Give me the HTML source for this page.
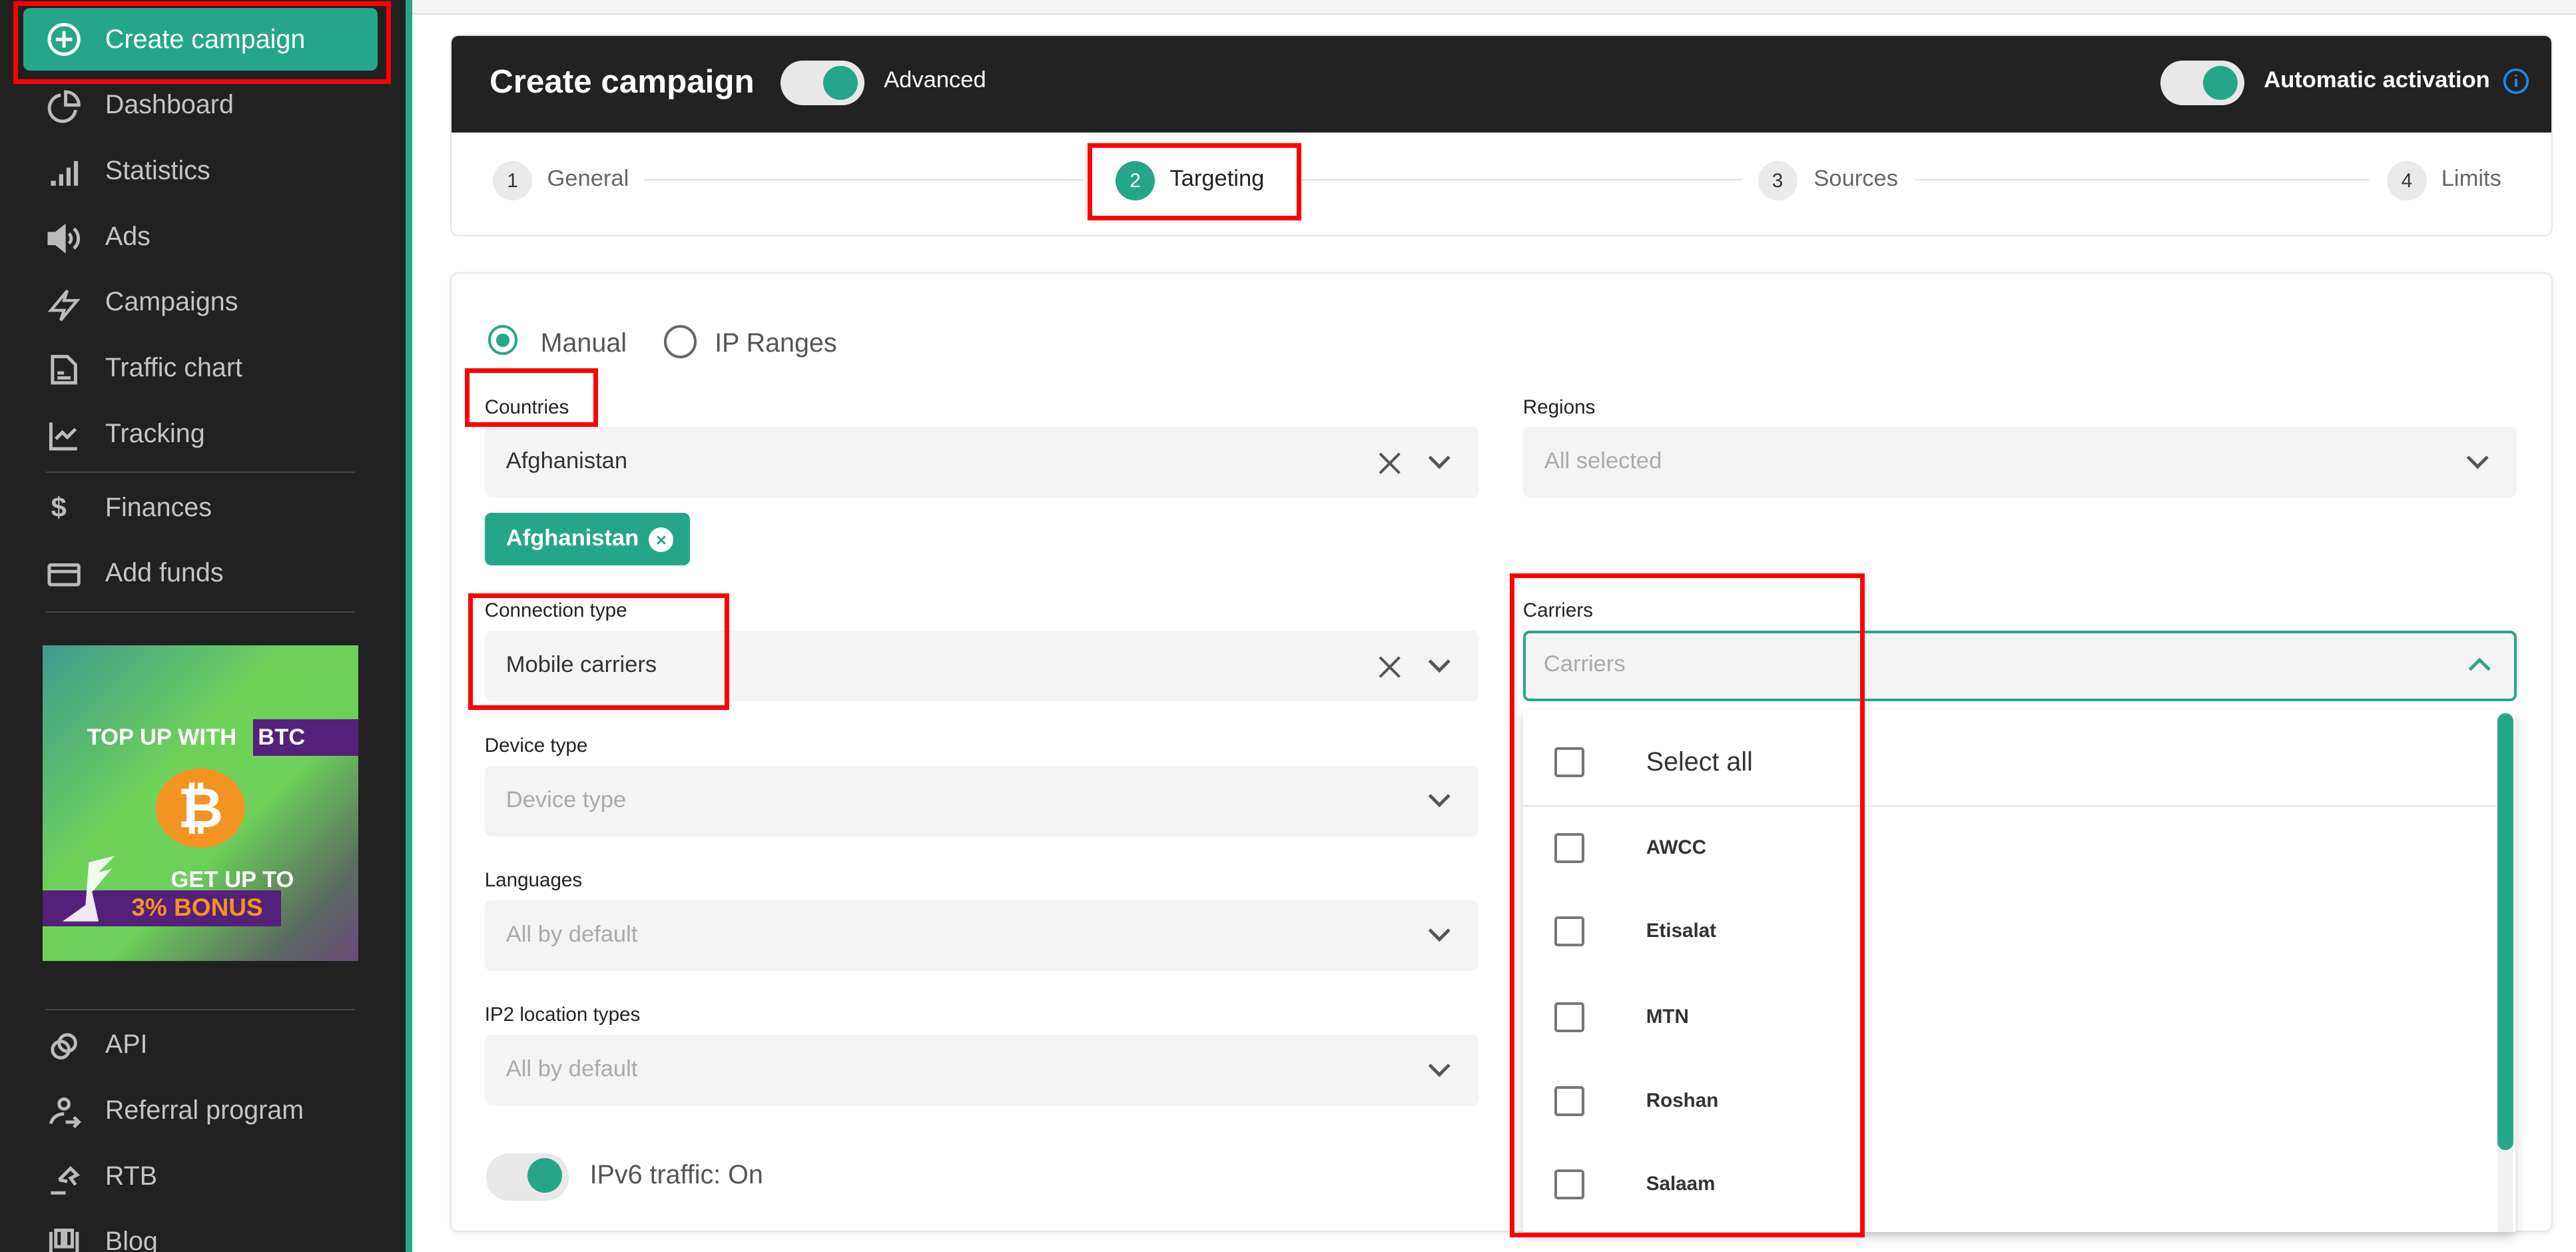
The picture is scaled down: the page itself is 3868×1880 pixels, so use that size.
<!DOCTYPE html>
<html><head><meta charset="utf-8"><style>
html,body{margin:0;padding:0;}
html{width:3868px;height:1880px;overflow:hidden;background:#fff;}
#r{position:relative;width:1568px;height:762px;zoom:2.46684;font-family:"Liberation Sans",sans-serif;overflow:hidden;background:#fff;}
.a{position:absolute;}
.sb{left:0;top:0;width:247px;height:762px;background:#212121;}
.stripe{left:247px;top:0;width:4px;height:762px;background:#26a587;}
.mi{left:64px;color:#c4c4c4;font-size:16px;line-height:20px;}
.ic{left:28px;width:22px;height:22px;}
.sep{left:28px;width:188px;height:1px;background:#444;}
.red{border:3px solid #f00;box-sizing:border-box;}
.lbl{font-size:12px;color:#222;}
.inp{background:#f4f4f4;border-radius:4px;height:43px;}
.inp span{position:absolute;left:13px;top:13px;font-size:14px;color:#333;}
.ph span{color:#aaa!important;}
.chev{position:absolute;right:17px;top:16px;}
.cb{left:946px;width:15px;height:15px;border:2px solid #777;border-radius:2px;}
.it{left:1002px;font-size:12px;font-weight:bold;color:#333;}
.circ{width:24px;height:24px;border-radius:50%;background:#eaeaea;color:#333;font-size:12px;text-align:center;line-height:24px;}
.st{font-size:14px;color:#666;}
.tgl{width:51px;height:27px;border-radius:14px;background:#e8e8e8;}
.tgl::after{content:"";position:absolute;right:4px;top:3px;width:21px;height:21px;border-radius:50%;background:#26a688;}
</style></head><body><div id="r">
<div class="a" style="left:251px;top:0;width:1317px;height:8px;background:#f3f3f3;border-bottom:1px solid #ddd"></div>
<div class="a sb"></div><div class="a stripe"></div>
<div class="a" style="left:14px;top:5px;width:216px;height:38px;background:#26a688;border-radius:4px"></div>
<div class="a red" style="left:8px;top:1px;width:230px;height:50px"></div>
<svg class="a" style="left:28px;top:13px" width="22" height="22" viewBox="0 0 22 22" fill="none" stroke="#fff" stroke-width="2"><circle cx="11" cy="11" r="9"/><path d="M11 6v10M6 11h10"/></svg>
<div class="a mi" style="top:14px;color:#fff">Create campaign</div>
<svg class="a" style="left:28px;top:54px" width="22" height="22" viewBox="0 0 22 22" fill="none" stroke="#bbb" stroke-width="2"><path d="M9 4a8 8 0 1 0 9 9"/><path d="M12 2v8h8a8 8 0 0 0-8-8z"/></svg>
<div class="a mi" style="top:54px">Dashboard</div>
<svg class="a" style="left:28px;top:94px" width="22" height="22" fill="#bbb"><rect x="3" y="16" width="3" height="3"/><rect x="8" y="12" width="2.5" height="7"/><rect x="12.5" y="8" width="2.5" height="11"/><rect x="17" y="4" width="2.5" height="15"/></svg>
<div class="a mi" style="top:94px">Statistics</div>
<svg class="a" style="left:28px;top:134px" width="22" height="22" fill="none" stroke="#bbb" stroke-width="2"><path d="M2 8h4l5-4v14l-5-4H2z" fill="#bbb"/><path d="M14 8a4 4 0 0 1 0 6M17 5a8 8 0 0 1 0 12"/></svg>
<div class="a mi" style="top:134px">Ads</div>
<svg class="a" style="left:28px;top:174px" width="22" height="22" fill="none" stroke="#bbb" stroke-width="1.8"><path d="M13 3L3 15h8l-2 6 10-12h-8z"/></svg>
<div class="a mi" style="top:174px">Campaigns</div>
<svg class="a" style="left:28px;top:214px" width="22" height="22" fill="none" stroke="#bbb" stroke-width="2"><path d="M4 3h9l5 5v11H4z"/><path d="M7 13h4M7 16h8"/></svg>
<div class="a mi" style="top:214px">Traffic chart</div>
<svg class="a" style="left:28px;top:254px" width="22" height="22" fill="none" stroke="#bbb" stroke-width="2"><path d="M3 3v16h16M6 13l4-4 3 3 5-5"/></svg>
<div class="a mi" style="top:254px">Tracking</div>
<div class="a sep" style="top:287px"></div>
<div class="a" style="left:31px;top:299px;color:#bbb;font-size:17px;font-weight:bold">$</div>
<div class="a mi" style="top:299px">Finances</div>
<svg class="a" style="left:28px;top:339px" width="22" height="22" fill="none" stroke="#bbb" stroke-width="2"><rect x="2" y="5" width="18" height="12" rx="1"/><path d="M2 9h18"/></svg>
<div class="a mi" style="top:339px">Add funds</div>
<div class="a sep" style="top:372px"></div>
<div class="a" style="left:26px;top:393px;width:192px;height:192px;background:linear-gradient(135deg,#3f9a8f 0%,#6fd25a 40%,#6bd05a 60%,#5b6a60 85%,#6a4a7a 100%);overflow:hidden">
<div class="a" style="left:27px;top:48px;color:#fff;font-weight:bold;font-size:14px;white-space:nowrap">TOP UP WITH</div>
<div class="a" style="left:128px;top:45px;width:64px;height:22px;background:#55207a"></div>
<div class="a" style="left:131px;top:48px;color:#fff;font-weight:bold;font-size:14px">BTC</div>
<div class="a" style="left:69px;top:75px;width:54px;height:48px;border-radius:50%;background:#f39322;color:#fff;font-weight:bold;font-size:34px;text-align:center;line-height:48px">₿</div>
<div class="a" style="left:78px;top:135px;color:#fff;font-weight:bold;font-size:14px;white-space:nowrap">GET UP TO</div>
<div class="a" style="left:0;top:149px;width:145px;height:22px;background:#55207a"></div>
<div class="a" style="left:54px;top:151px;color:#f39322;font-weight:bold;font-size:15px;white-space:nowrap">3% BONUS</div>
<svg class="a" style="left:8px;top:128px" width="45" height="50"><path d="M20 4L36 0 26 10 34 8 22 22 26 40 4 40 18 30z" fill="#fff" opacity=".9"/></svg>
</div>
<div class="a sep" style="top:614px"></div>
<svg class="a" style="left:28px;top:626px" width="22" height="22" fill="none" stroke="#bbb" stroke-width="2"><circle cx="13" cy="9" r="5"/><circle cx="9" cy="13" r="5"/></svg>
<div class="a mi" style="top:626px">API</div>
<svg class="a" style="left:28px;top:666px" width="22" height="22" fill="none" stroke="#bbb" stroke-width="2"><circle cx="11" cy="6" r="3"/><path d="M3 18a8 7 0 0 1 8-6M12 17h8M17 14l3 3-3 3"/></svg>
<div class="a mi" style="top:666px">Referral program</div>
<svg class="a" style="left:28px;top:706px" width="22" height="22" fill="none" stroke="#bbb" stroke-width="2"><path d="M3 20h9M8 12l7-7 4 4-4 2 3 4M8 12l5 1"/></svg>
<div class="a mi" style="top:706px">RTB</div>
<svg class="a" style="left:28px;top:746px" width="22" height="22" fill="none" stroke="#bbb" stroke-width="2"><path d="M3 4v14h16V4M6 3h4v10H6zM12 3h4v10h-4z"/></svg>
<div class="a mi" style="top:746px">Blog</div>

<!-- header card -->
<div class="a" style="left:274px;top:21px;width:1280px;height:123px;border:1px solid #e4e4e4;border-radius:5px;box-sizing:border-box;overflow:hidden">
<div class="a" style="left:0;top:0;width:1280px;height:59px;background:#222"></div>
</div>
<div class="a" style="left:298px;top:38px;color:#fff;font-size:20px;font-weight:bold">Create campaign</div>
<div class="a tgl" style="left:475px;top:37px"></div>
<div class="a" style="left:538px;top:41px;color:#fff;font-size:14px">Advanced</div>
<div class="a tgl" style="left:1315px;top:37px"></div>
<div class="a" style="left:1378px;top:41px;color:#fff;font-size:14px;font-weight:bold">Automatic activation</div>
<svg class="a" style="left:1523px;top:41px" width="17" height="17" fill="none" stroke="#1e88e5" stroke-width="1.5"><circle cx="8.5" cy="8.5" r="7"/><path d="M8.5 7v5M8.5 4.5v1"/></svg>
<div class="a" style="left:392px;top:109px;width:268px;height:1px;background:#ddd"></div>
<div class="a" style="left:792px;top:109px;width:268px;height:1px;background:#ddd"></div>
<div class="a" style="left:1166px;top:109px;width:276px;height:1px;background:#ddd"></div>
<div class="a circ" style="left:300px;top:98px">1</div><div class="a st" style="left:333px;top:101px">General</div>
<div class="a circ" style="left:679px;top:98px;background:#26a688;color:#fff">2</div><div class="a st" style="left:712px;top:101px;color:#222">Targeting</div>
<div class="a red" style="left:662px;top:87px;width:130px;height:47px"></div>
<div class="a circ" style="left:1070px;top:98px">3</div><div class="a st" style="left:1104px;top:101px">Sources</div>
<div class="a circ" style="left:1453px;top:98px">4</div><div class="a st" style="left:1486px;top:101px">Limits</div>

<!-- form card -->
<div class="a" style="left:274px;top:166px;width:1280px;height:584px;border:1px solid #e6e6e6;border-radius:5px;box-sizing:border-box;box-shadow:0 1px 3px rgba(0,0,0,.08)"></div>
<div class="a" style="left:297px;top:198px;width:18px;height:18px;border:2px solid #26a688;border-radius:50%;box-sizing:border-box"></div>
<div class="a" style="left:302px;top:203px;width:8px;height:8px;background:#26a688;border-radius:50%"></div>
<div class="a" style="left:329px;top:200px;font-size:16px;color:#555">Manual</div>
<div class="a" style="left:404px;top:198px;width:20px;height:20px;border:2px solid #666;border-radius:50%;box-sizing:border-box"></div>
<div class="a" style="left:435px;top:200px;font-size:16px;color:#555">IP Ranges</div>

<div class="a lbl" style="left:295px;top:241px">Countries</div>
<div class="a red" style="left:283px;top:224px;width:81px;height:36px"></div>
<div class="a inp" style="left:295px;top:260px;width:605px"><span>Afghanistan</span>
<svg class="chev" style="right:46px;top:14px" width="16" height="16" fill="none" stroke="#555" stroke-width="1.6"><path d="M2 2l12 12M14 2L2 14"/></svg>
<svg class="chev" width="14" height="10" fill="none" stroke="#555" stroke-width="2"><path d="M1 2l6 6 6-6"/></svg></div>
<div class="a" style="left:295px;top:312px;width:125px;height:32px;background:#26a688;border-radius:4px"></div>
<div class="a" style="left:308px;top:320px;color:#fff;font-size:14px;font-weight:bold">Afghanistan</div>
<div class="a" style="left:395px;top:321px;width:15px;height:15px;border-radius:50%;background:#fff;color:#26a688;font-size:11px;text-align:center;line-height:15px;font-weight:bold">×</div>

<div class="a lbl" style="left:295px;top:365px">Connection type</div>
<div class="a inp" style="left:295px;top:384px;width:605px"><span>Mobile carriers</span>
<svg class="chev" style="right:46px;top:14px" width="16" height="16" fill="none" stroke="#555" stroke-width="1.6"><path d="M2 2l12 12M14 2L2 14"/></svg>
<svg class="chev" width="14" height="10" fill="none" stroke="#555" stroke-width="2"><path d="M1 2l6 6 6-6"/></svg></div>
<div class="a red" style="left:285px;top:361px;width:159px;height:71px"></div>

<div class="a lbl" style="left:295px;top:447px">Device type</div>
<div class="a inp ph" style="left:295px;top:466px;width:605px"><span>Device type</span><svg class="chev" width="14" height="10" fill="none" stroke="#555" stroke-width="2"><path d="M1 2l6 6 6-6"/></svg></div>
<div class="a lbl" style="left:295px;top:529px">Languages</div>
<div class="a inp ph" style="left:295px;top:548px;width:605px"><span>All by default</span><svg class="chev" width="14" height="10" fill="none" stroke="#555" stroke-width="2"><path d="M1 2l6 6 6-6"/></svg></div>
<div class="a lbl" style="left:295px;top:611px">IP2 location types</div>
<div class="a inp ph" style="left:295px;top:630px;width:605px"><span>All by default</span><svg class="chev" width="14" height="10" fill="none" stroke="#555" stroke-width="2"><path d="M1 2l6 6 6-6"/></svg></div>
<div class="a tgl" style="left:296px;top:702px;width:50px;height:29px"></div>
<div class="a" style="left:359px;top:706px;font-size:16px;color:#555">IPv6 traffic: On</div>

<div class="a lbl" style="left:927px;top:241px">Regions</div>
<div class="a inp ph" style="left:927px;top:260px;width:605px"><span>All selected</span><svg class="chev" width="14" height="10" fill="none" stroke="#555" stroke-width="2"><path d="M1 2l6 6 6-6"/></svg></div>
<div class="a lbl" style="left:927px;top:365px">Carriers</div>
<div class="a inp ph" style="left:927px;top:384px;width:605px;border:2px solid #26a688;box-sizing:border-box"><span style="left:11px;top:11px">Carriers</span><svg class="chev" style="right:14px;top:14px" width="14" height="10" fill="none" stroke="#26a688" stroke-width="2"><path d="M1 8l6-6 6 6"/></svg></div>
<div class="a" style="left:927px;top:432px;width:604px;height:318px;background:#fff;box-shadow:0 3px 6px rgba(0,0,0,.2)"></div>
<div class="a" style="left:1520px;top:434px;width:10px;height:316px;background:#f0f0f0"></div>
<div class="a" style="left:1520px;top:434px;width:10px;height:266px;background:#26a688;border-radius:5px"></div>
<div class="a" style="left:927px;top:490px;width:592px;height:1px;background:#e0e0e0"></div>
<div class="a cb" style="top:455px"></div><div class="a" style="left:1002px;top:455px;font-size:16px;color:#333">Select all</div>
<div class="a cb" style="top:507px"></div><div class="a it" style="top:509px">AWCC</div>
<div class="a cb" style="top:558px"></div><div class="a it" style="top:560px">Etisalat</div>
<div class="a cb" style="top:610px"></div><div class="a it" style="top:612px">MTN</div>
<div class="a cb" style="top:661px"></div><div class="a it" style="top:663px">Roshan</div>
<div class="a cb" style="top:712px"></div><div class="a it" style="top:714px">Salaam</div>
<div class="a red" style="left:919px;top:349px;width:216px;height:404px"></div>
</div></body></html>
